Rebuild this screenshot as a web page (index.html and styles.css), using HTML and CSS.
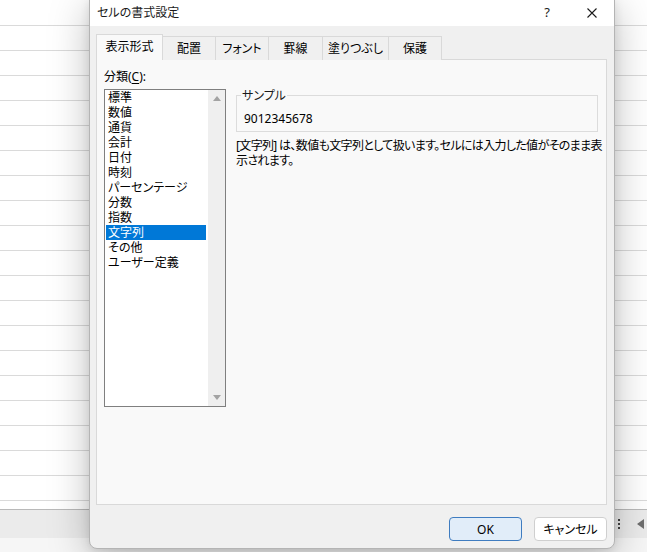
FILE: index.html
```html
<!DOCTYPE html>
<html lang="ja">
<head>
<meta charset="utf-8">
<title>セルの書式設定</title>
<link rel="stylesheet" href="styles.css">
</head>
<body>
<div class="sheet">
  <div class="rows">
    <div class="row"></div><div class="row"></div><div class="row"></div><div class="row"></div>
    <div class="row"></div><div class="row"></div><div class="row"></div><div class="row"></div>
    <div class="row"></div><div class="row"></div><div class="row"></div><div class="row"></div>
    <div class="row"></div><div class="row"></div><div class="row"></div><div class="row"></div>
    <div class="row"></div><div class="row"></div><div class="row"></div><div class="row"></div>
    <div class="row"></div>
  </div>
  <div class="statusbar">
    <span class="dots"><i></i><i></i><i></i></span>
    <span class="tri-left"></span>
  </div>
  <div class="bottomstrip"></div>
</div>

<div class="dialog">
  <div class="titlebar">
    <span class="title">セルの書式設定</span>
    <span class="help">?</span>
    <span class="close">
      <svg width="10" height="10" viewBox="0 0 10 10"><path d="M0.5 0.5 L9.5 9.5 M9.5 0.5 L0.5 9.5" stroke="#1a1a1a" stroke-width="1.1" fill="none"/></svg>
    </span>
  </div>
  <div class="body">
    <div class="tabs">
      <div class="tab tab-sel w67">表示形式</div>
      <div class="tab w54">配置</div>
      <div class="tab w54">フォント</div>
      <div class="tab w55">罫線</div>
      <div class="tab w67">塗りつぶし</div>
      <div class="tab w54">保護</div>
    </div>
    <div class="panel">
      <div class="leftcol">
        <div class="label">分類(<u>C</u>):</div>
        <div class="listbox">
          <div class="items">
            <div class="item">標準</div>
            <div class="item">数値</div>
            <div class="item">通貨</div>
            <div class="item">会計</div>
            <div class="item">日付</div>
            <div class="item">時刻</div>
            <div class="item">パーセンテージ</div>
            <div class="item">分数</div>
            <div class="item">指数</div>
            <div class="item item-sel">文字列</div>
            <div class="item">その他</div>
            <div class="item">ユーザー定義</div>
          </div>
          <div class="scrollbar">
            <span class="arrow-up"></span>
            <span class="arrow-down"></span>
          </div>
        </div>
      </div>
      <div class="rightcol">
        <fieldset class="sample">
          <legend>サンプル</legend>
          <div class="value">9012345678</div>
        </fieldset>
        <p class="desc">[文字列] は、数値も文字列として扱います。セルには入力した値がそのまま表<br>示されます。</p>
      </div>
    </div>
    <div class="footer">
      <button class="btn btn-ok">OK</button>
      <button class="btn">キャンセル</button>
    </div>
  </div>
</div>
</body>
</html>
```

FILE: styles.css
```css
* { box-sizing: border-box; }

html, body {
  margin: 0;
  padding: 0;
}

body {
  width: 647px;
  height: 552px;
  overflow: hidden;
  position: relative;
  background: #ffffff;
  font-family: "Noto Sans", "Noto Sans CJK JP", sans-serif;
  font-size: 12px;
  color: #000;
  font-feature-settings: "palt";
}

/* ---------- spreadsheet behind ---------- */
.sheet {
  display: flex;
  flex-direction: column;
  height: 552px;
}

.rows {
  height: 510px;
  padding-top: 1px;
  overflow: hidden;
  border-bottom: 1px solid #b9b9b9;
  flex: none;
}

.row {
  height: 25px;
  border-bottom: 1px solid #dadada;
}

.statusbar {
  height: 28px;
  background: #ebebeb;
  display: flex;
  align-items: center;
  justify-content: flex-end;
  padding-right: 3px;
  gap: 17px;
  flex: none;
}

.dots {
  display: flex;
  flex-direction: column;
  gap: 2px;
}

.dots i {
  display: block;
  width: 2px;
  height: 2px;
  background: #444;
}

.tri-left {
  width: 0;
  height: 0;
  border-top: 5px solid transparent;
  border-bottom: 5px solid transparent;
  border-right: 7px solid #6e6e6e;
}

.bottomstrip {
  flex: 1;
  background: #f6f6f6;
}

/* ---------- dialog ---------- */
.dialog {
  position: absolute;
  left: 89px;
  top: -1px;
  width: 526px;
  border: 1px solid #b4b4b4;
  border-radius: 0 0 8px 8px;
  background: #f0f0f0;
  box-shadow: 0 8px 40px rgba(0, 0, 0, 0.26), 0 2px 10px rgba(0, 0, 0, 0.1);
  overflow: hidden;
}

.titlebar {
  height: 26px;
  background: #ffffff;
  display: flex;
  align-items: center;
  padding: 0 0 2px 7px;
  color: #1a1a1a;
}

.title {
  flex: 1;
  line-height: 15px;
}

.help {
  font-size: 13px;
  line-height: 15px;
  width: 12px;
  text-align: center;
  margin-right: 34px;
}

.close {
  display: flex;
  width: 10px;
  height: 10px;
  margin-right: 17px;
  margin-top: 1px;
}

.body {
  padding: 8px 7px 7px 6px;
}

.tabs {
  display: flex;
  align-items: flex-end;
  height: 26px;
  margin-bottom: -1px;
  position: relative;
  z-index: 1;
}

.tab {
  height: 24px;
  border: 1px solid #d9d9d9;
  border-bottom: none;
  background: #f0f0f0;
  display: flex;
  align-items: center;
  justify-content: center;
  line-height: 15px;
  margin-left: -1px;
  white-space: nowrap;
}

.tab:first-child { margin-left: 0; }

.tab-sel {
  height: 26px;
  background: #f9f9f9;
  padding-bottom: 3px;
  position: relative;
  z-index: 2;
}

.w67 { width: 67px; }
.w54 { width: 54px; }
.w55 { width: 55px; }

.panel {
  height: 446px;
  background: #f9f9f9;
  border: 1px solid #d9d9d9;
  display: flex;
  padding: 9px 7px 0 7px;
  gap: 10px;
}

.leftcol {
  width: 122px;
  flex: none;
}

.label {
  line-height: 15px;
  margin-bottom: 5px;
}

.label u {
  text-underline-offset: 2px;
}

.listbox {
  width: 122px;
  height: 318px;
  border: 1px solid #7f7f7f;
  background: #ffffff;
  display: flex;
}

.items {
  flex: 1;
  padding: 0 2px 0 1px;
}

.item {
  height: 15px;
  line-height: 15px;
  padding-left: 2px;
  white-space: nowrap;
}

.item-sel {
  background: #0078d7;
  color: #ffffff;
}

.scrollbar {
  width: 17px;
  flex: none;
  background: #efefef;
  display: flex;
  flex-direction: column;
  justify-content: space-between;
  align-items: center;
  padding: 6px 0 6px 0;
}

.arrow-up {
  width: 0;
  height: 0;
  border-left: 4px solid transparent;
  border-right: 4px solid transparent;
  border-bottom: 5px solid #a3a3a3;
}

.arrow-down {
  width: 0;
  height: 0;
  border-left: 4px solid transparent;
  border-right: 4px solid transparent;
  border-top: 5px solid #a3a3a3;
}

.rightcol {
  flex: 1;
  min-width: 0;
  padding-top: 19px;
  padding-right: 1px;
}

.sample {
  margin: 0;
  padding: 0 7px 5px 7px;
  border: 1px solid #dcdcdc;
  min-width: 0;
}

.sample legend {
  padding: 0 1px;
  margin-left: -3px;
  line-height: 15px;
  color: #1a1a1a;
}

.value {
  line-height: 15px;
  margin-top: 8px;
}

.desc {
  margin: 6px 0 0 0;
  line-height: 15px;
  white-space: nowrap;
  letter-spacing: -0.65px;
}

.footer {
  display: flex;
  justify-content: flex-end;
  gap: 12px;
  padding-top: 12px;
}

.btn {
  width: 73px;
  height: 24px;
  border: 1px solid #cfcfcf;
  border-radius: 4px;
  background: #ffffff;
  font: inherit;
  font-size: 12px;
  color: #000;
  padding: 0;
  line-height: 15px;
}

.btn-ok {
  border-color: #3f7cc0;
  background: #e1edf9;
}
```
